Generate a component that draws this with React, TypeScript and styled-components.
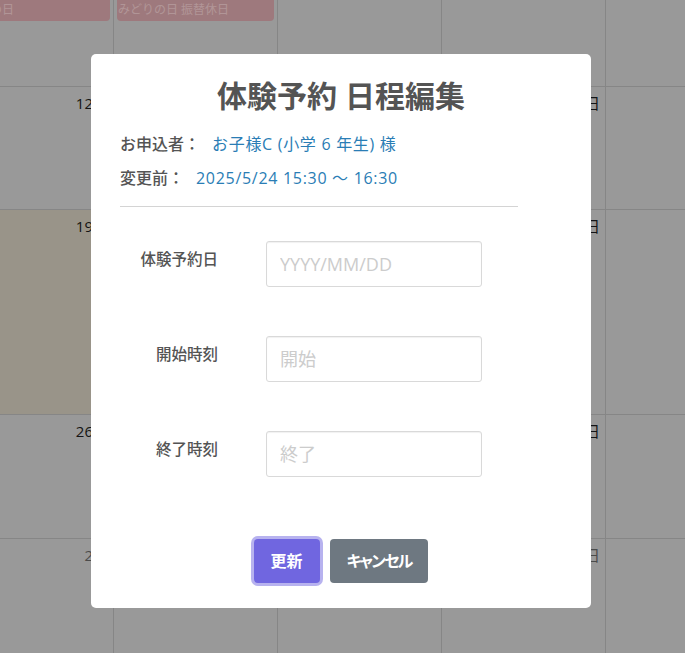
import React from "react";
import styled, { createGlobalStyle } from "styled-components";

const Global = createGlobalStyle`
  html, body { margin: 0; padding: 0; height: 100%; overflow: hidden; }
  body {
    background: #dbdbdb;
    font-family: "Open Sans", "Noto Sans CJK JP", sans-serif;
  }
`;

const JP = `"Open Sans", "Noto Sans CJK JP", sans-serif`;

/* ---------- calendar background ---------- */
const Calendar = styled.div`
  display: grid;
  grid-template-columns: repeat(5, 164px);
  grid-template-rows: 87px 123px 205px 124px 130px;
  margin-left: -50px;
  width: max-content;
`;

const Cell = styled.div<{ $today?: boolean; $other?: boolean }>`
  box-sizing: border-box;
  border-right: 1px solid #c1c1c1;
  border-bottom: 1px solid #c1c1c1;
  background: ${(p) => (p.$today ? "#dbd5c4" : "transparent")};
  display: flex;
  flex-direction: column;
  align-items: stretch;
  padding: 4px 5px;
  font-family: ${JP};
  font-size: 15px;
  line-height: 24px;
  color: ${(p) => (p.$other ? "#6c6c6c" : "#1d1e20")};
`;

const TopCell = styled(Cell)`
  padding: 0 3px;
`;

const DayNum = styled.div`
  text-align: right;
`;

const Chip = styled.div`
  height: 21px;
  background: #e2aeb3;
  border-radius: 0 0 4px 4px;
  color: #fed6d9;
  font-size: 12px;
  line-height: 19px;
  padding: 0 1px;
  white-space: nowrap;
  overflow: hidden;
`;

/* ---------- modal ---------- */
const Backdrop = styled.div`
  position: fixed;
  inset: 0;
  background: rgba(0, 0, 0, 0.3);
  display: flex;
  justify-content: center;
  align-items: flex-start;
  padding: 54px 3px 0 0;
  box-sizing: border-box;
`;

const Popup = styled.div`
  width: 500px;
  box-sizing: border-box;
  background: #fff;
  border-radius: 5px;
  padding: 24px 29px 25px;
  display: flex;
  flex-direction: column;
  font-family: ${JP};
  color: #545454;
`;

const Title = styled.h2`
  margin: 0;
  font-size: 30px;
  line-height: 36px;
  font-weight: 700;
  text-align: center;
  color: #545454;
`;

const Info = styled.div`
  margin-top: 12px;
  display: flex;
  flex-direction: column;
`;

const InfoRow = styled.div`
  display: flex;
  align-items: center;
  gap: 12px;
  height: 34px;
  font-size: 16px;
`;

const InfoLabel = styled.span`
  font-weight: 500;
  color: #545454;
`;

const InfoValue = styled.span`
  color: #2a7db5;
  letter-spacing: 0.7px;
`;

const Divider = styled.hr`
  width: 90%;
  margin: 12px 0 0;
  border: none;
  border-top: 1px solid #d4d4d4;
`;

const Form = styled.div`
  margin-top: 34px;
  display: grid;
  grid-template-columns: 98px 216px;
  column-gap: 48px;
  row-gap: 49px;
`;

const FieldLabel = styled.label`
  padding-top: 8px;
  font-size: 15.5px;
  line-height: 20px;
  font-weight: 500;
  text-align: right;
  color: #545454;
`;

const Input = styled.input`
  box-sizing: border-box;
  width: 216px;
  height: 46px;
  margin: 0;
  padding: 0 13px;
  border: 1px solid #d9d9d9;
  border-radius: 3px;
  box-shadow: inset 0 1px 1px rgba(0, 0, 0, 0.06);
  font-family: ${JP};
  font-size: 18px;
  color: #545454;
  background: #fff;
  outline: none;
  &::placeholder { color: #cccccc; }
`;

const Actions = styled.div`
  margin-top: 62px;
  display: flex;
  justify-content: center;
  gap: 10px;
`;

const Button = styled.button<{ $variant: "confirm" | "cancel" }>`
  height: 44px;
  margin: 0;
  padding: 0 17px;
  border: none;
  border-radius: 4px;
  font-family: ${JP};
  font-size: 16px;
  font-weight: 700;
  line-height: 24px;
  color: #fff;
  font-feature-settings: "palt";
  letter-spacing: ${(p) => (p.$variant === "confirm" ? "0" : "-1.8px")};
  cursor: pointer;
  background: ${(p) => (p.$variant === "confirm" ? "#7066e0" : "#6e7881")};
  box-shadow: ${(p) =>
    p.$variant === "confirm" ? "0 0 0 3px rgba(112, 102, 224, 0.5)" : "none"};
`;

const weeks: { day: string; other?: boolean }[][] = [
  [{ day: "12日" }, { day: "13日" }, { day: "14日" }, { day: "15日" }, { day: "16日" }],
  [{ day: "19日" }, { day: "20日" }, { day: "21日" }, { day: "22日" }, { day: "23日" }],
  [{ day: "26日" }, { day: "27日" }, { day: "28日" }, { day: "29日" }, { day: "30日" }],
  [
    { day: "2日", other: true },
    { day: "3日", other: true },
    { day: "4日", other: true },
    { day: "5日", other: true },
    { day: "6日", other: true },
  ],
];

const chips = ["こどもの日", "みどりの日 振替休日", "", "", ""];

export default function App() {
  return (
    <>
      <Global />
      <Calendar>
        {chips.map((c, i) => (
          <TopCell key={`t${i}`}>{c && <Chip>{c}</Chip>}</TopCell>
        ))}
        {weeks.map((w, r) =>
          w.map((d, i) => (
            <Cell key={`${r}-${i}`} $today={r === 1 && i === 0} $other={d.other}>
              <DayNum>{d.day}</DayNum>
            </Cell>
          ))
        )}
      </Calendar>
      <Backdrop>
        <Popup>
          <Title>体験予約 日程編集</Title>
          <Info>
            <InfoRow>
              <InfoLabel>お申込者：</InfoLabel>
              <InfoValue>お子様C (小学 6 年生) 様</InfoValue>
            </InfoRow>
            <InfoRow>
              <InfoLabel>変更前：</InfoLabel>
              <InfoValue>2025/5/24 15:30 〜 16:30</InfoValue>
            </InfoRow>
          </Info>
          <Divider />
          <Form>
            <FieldLabel>体験予約日</FieldLabel>
            <Input placeholder="YYYY/MM/DD" />
            <FieldLabel>開始時刻</FieldLabel>
            <Input placeholder="開始" />
            <FieldLabel>終了時刻</FieldLabel>
            <Input placeholder="終了" />
          </Form>
          <Actions>
            <Button $variant="confirm">更新</Button>
            <Button $variant="cancel">キャンセル</Button>
          </Actions>
        </Popup>
      </Backdrop>
    </>
  );
}
